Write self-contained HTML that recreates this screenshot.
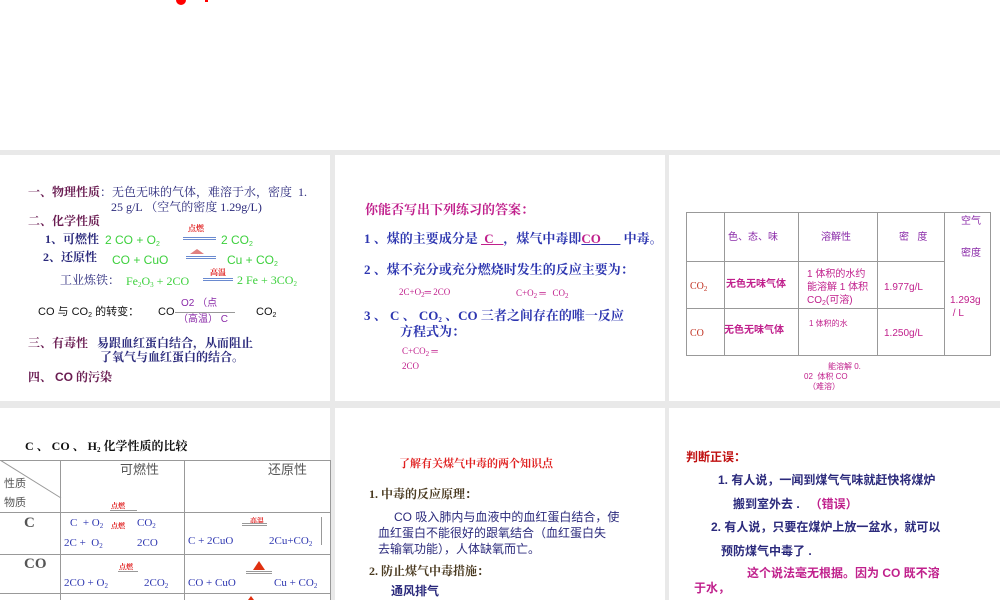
<!DOCTYPE html>
<html><head><meta charset="utf-8"><style>
*{margin:0;padding:0;box-sizing:border-box}
body{width:1000px;height:600px;overflow:hidden;background:#fff;position:relative;font-family:"Liberation Serif","Noto Serif CJK SC",serif;}
.bg{position:absolute;left:0;top:150px;width:1000px;height:450px;background:#e9e9e9}
.p{position:absolute;background:#fff;overflow:hidden}
.t{position:absolute;white-space:nowrap;font-size:11px;line-height:13px}
.s{font-family:"Liberation Sans","Noto Sans CJK SC",sans-serif}
.b{font-weight:bold}
sub{font-size:7px;vertical-align:-2px}
.nv{color:#2b2a7c}.mr{color:#6a1d52}.gr{color:#3dd03d}.rd{color:#e02020}.mg{color:#c0208c}.pu{color:#8a2aa8}.bl{color:#2d36b0}
.ln{position:absolute;background:#999}
.dl{position:absolute;height:3px;border-top:1px solid #6a8ad0;border-bottom:1px solid #6a8ad0}
.f12{font-size:12px;line-height:14px}
.f13{font-size:13px;line-height:15px}
</style></head><body>
<div style="position:absolute;left:176px;top:0;width:10px;height:5px;background:#f00;border-radius:0 0 6px 6px"></div>
<div style="position:absolute;left:205px;top:0;width:3px;height:2px;background:#f00"></div>
<div class="bg"></div>

<!-- panel 1 -->
<div class="p" style="left:0;top:155px;width:330px;height:246px"></div>
<div class="t b mr f12" style="left:28px;top:185px">一、物理性质<span class="nv" style="font-weight:normal">：无色无味的气体，难溶于水，密度&nbsp; 1.</span></div>
<div class="t nv f12" style="left:111px;top:200px">25 g/L （空气的密度 1.29g/L)</div>
<div class="t b mr f12" style="left:28px;top:214px">二、化学性质</div>
<div class="t b nv f12" style="left:45px;top:232px">1、可燃性</div>
<div class="t s gr f12" style="left:105px;top:233px">2 CO + O<sub>2</sub></div>
<div class="t b rd" style="left:188px;top:222px;font-size:8px">点燃</div>
<div class="dl" style="left:183px;top:237px;width:33px"></div>
<div class="t s gr f12" style="left:221px;top:233px">2 CO<sub>2</sub></div>
<div class="t b nv f12" style="left:43px;top:250px">2、还原性</div>
<div class="t s gr f12" style="left:112px;top:253px">CO + CuO</div>
<div style="position:absolute;left:190px;top:249px;width:0;height:0;border-left:7px solid transparent;border-right:7px solid transparent;border-bottom:5px solid #e08080"></div>
<div class="dl" style="left:186px;top:256px;width:30px"></div>
<div class="t s gr f12" style="left:227px;top:253px">Cu + CO<sub>2</sub></div>
<div class="t nv f12" style="left:60px;top:273px">工业炼铁：</div>
<div class="t gr f12" style="left:126px;top:274px">Fe<sub>2</sub>O<sub>3</sub> + 2CO</div>
<div class="t b rd" style="left:210px;top:266px;font-size:8px">高温</div>
<div class="dl" style="left:203px;top:278px;width:30px"></div>
<div class="t gr f12" style="left:237px;top:273px">2 Fe + 3CO<sub>2</sub></div>
<div class="t s" style="left:38px;top:306px;color:#111">CO 与 CO<sub>2</sub> 的转变：</div>
<div class="t s" style="left:158px;top:306px;color:#111">CO</div>
<div class="t s pu" style="left:181px;top:297px;font-size:10px">O2 （点</div>
<div class="t s pu" style="left:178px;top:313px;font-size:10px">（高温） C</div>
<div class="ln" style="left:175px;top:312px;width:60px;height:1px"></div>
<div class="t s" style="left:256px;top:306px;color:#111">CO<sub>2</sub></div>
<div class="t b nv f12" style="left:28px;top:336px"><span class="mr">三、有毒性</span>&nbsp;&nbsp; 易跟血红蛋白结合，从而阻止</div>
<div class="t b nv f12" style="left:100px;top:350px">了氧气与血红蛋白的结合。</div>
<div class="t b mr f12" style="left:28px;top:370px">四、 <span class="s">CO</span> 的污染</div>

<!-- panel 2 -->
<div class="p" style="left:335px;top:155px;width:330px;height:246px"></div>
<div class="t b mg f13" style="left:365px;top:202px">你能否写出下列练习的答案：</div>
<div class="t b bl f13" style="left:364px;top:231px">1 、煤的主要成分是 <u class="mg">&nbsp;C&nbsp;&nbsp;&nbsp;</u>，煤气中毒即<u><span class="mg">CO</span>&nbsp;&nbsp;&nbsp;&nbsp;&nbsp;&nbsp;</u> 中毒。</div>
<div class="t b bl f13" style="left:364px;top:262px">2 、煤不充分或充分燃烧时发生的反应主要为：</div>
<div class="t mg" style="left:399px;top:286px;font-size:9px">2C+O<sub>2</sub>═ 2CO</div>
<div class="t mg" style="left:516px;top:287px;font-size:9px">C+O<sub>2</sub> ═&nbsp;&nbsp; CO<sub>2</sub></div>
<div class="t b bl f13" style="left:364px;top:308px">3 、 C 、 CO<sub>2</sub> 、CO 三者之间存在的唯一反应</div>
<div class="t b bl f13" style="left:400px;top:324px">方程式为：</div>
<div class="t mg" style="left:402px;top:345px;font-size:9px">C+CO<sub>2</sub> ═</div>
<div class="t mg" style="left:402px;top:360px;font-size:9px">2CO</div>

<!-- panel 3 -->
<div class="p" style="left:669px;top:155px;width:331px;height:246px"></div>
<div style="position:absolute;left:686px;top:212px;width:305px;height:144px;border:1px solid #999"></div>
<div class="ln" style="left:724px;top:212px;width:1px;height:144px"></div>
<div class="ln" style="left:798px;top:212px;width:1px;height:144px"></div>
<div class="ln" style="left:877px;top:212px;width:1px;height:144px"></div>
<div class="ln" style="left:944px;top:212px;width:1px;height:144px"></div>
<div class="ln" style="left:686px;top:261px;width:258px;height:1px"></div>
<div class="ln" style="left:686px;top:308px;width:258px;height:1px"></div>
<div class="t s pu" style="left:728px;top:231px;font-size:10px">色、态、味</div>
<div class="t s pu" style="left:821px;top:231px;font-size:10px">溶解性</div>
<div class="t s pu" style="left:899px;top:231px;font-size:10px">密&nbsp;&nbsp;&nbsp;度</div>
<div class="t s pu" style="left:961px;top:215px;font-size:10px">空气</div>
<div class="t s pu" style="left:961px;top:247px;font-size:10px">密度</div>
<div class="t" style="left:690px;top:280px;color:#c03020;font-size:10px">CO<sub>2</sub></div>
<div class="t s b mg" style="left:726px;top:278px;font-size:10px">无色无味气体</div>
<div class="t s mg" style="left:807px;top:268px;font-size:10px;line-height:13px">1 体积的水约<br>能溶解 1 体积<br>CO<sub>2</sub>(可溶)</div>
<div class="t s mg" style="left:884px;top:281px;font-size:10px">1.977g/L</div>
<div class="t s mg" style="left:950px;top:294px;font-size:10px;line-height:13px">1.293g<br>&nbsp;/ L</div>
<div class="t" style="left:690px;top:327px;color:#c03020;font-size:10px">CO</div>
<div class="t s b mg" style="left:724px;top:324px;font-size:10px">无色无味气体</div>
<div class="t s mg" style="left:809px;top:317px;font-size:8px">1 体积的水</div>
<div class="t s mg" style="left:884px;top:327px;font-size:10px">1.250g/L</div>
<div class="t s mg" style="left:828px;top:362px;font-size:8px;line-height:10px">能溶解 0.</div>
<div class="t s mg" style="left:804px;top:372px;font-size:8px;line-height:10px">02&nbsp; 体积 CO</div>
<div class="t s mg" style="left:808px;top:382px;font-size:8px;line-height:10px">（难溶）</div>

<!-- panel 4 -->
<div class="p" style="left:0;top:408px;width:330px;height:192px"></div>
<div class="t b f12" style="left:25px;top:439px;color:#111">C 、 CO 、 H<sub>2</sub> 化学性质的比较</div>
<div style="position:absolute;left:0;top:460px;width:331px;height:140px;border-top:1px solid #999;border-right:1px solid #999"></div>
<div class="ln" style="left:60px;top:460px;width:1px;height:140px"></div>
<div class="ln" style="left:184px;top:460px;width:1px;height:140px"></div>
<div class="ln" style="left:0;top:512px;width:331px;height:1px"></div>
<div class="ln" style="left:0;top:554px;width:331px;height:1px"></div>
<div class="ln" style="left:0;top:593px;width:331px;height:1px"></div>
<svg style="position:absolute;left:0;top:460px" width="62" height="40"><line x1="0" y1="0" x2="61" y2="38" stroke="#999" stroke-width="1"/></svg>
<div class="t s" style="left:120px;top:463px;font-size:13px;color:#555">可燃性</div>
<div class="t s" style="left:268px;top:463px;font-size:13px;color:#555">还原性</div>
<div class="t s" style="left:4px;top:478px;color:#555">性质</div>
<div class="t s" style="left:4px;top:497px;color:#555">物质</div>
<div class="t b rd" style="left:111px;top:500px;font-size:7px">点燃</div>
<div class="ln" style="left:110px;top:510px;width:27px;height:1px"></div>
<div class="t b" style="left:24px;top:517px;font-size:15px;color:#555">C</div>
<div class="t bl" style="left:70px;top:517px">C&nbsp; + O<sub>2</sub></div>
<div class="t b rd" style="left:111px;top:520px;font-size:7px">点燃</div>
<div class="t bl" style="left:137px;top:517px">CO<sub>2</sub></div>
<div class="t bl" style="left:64px;top:537px">2C +&nbsp; O<sub>2</sub></div>
<div class="t bl" style="left:137px;top:537px">2CO</div>
<div class="t b rd" style="left:250px;top:515px;font-size:7px">高温</div>
<div class="dl" style="left:242px;top:523px;width:25px;border-color:#999"></div>
<div class="t bl" style="left:188px;top:535px">C + 2CuO</div>
<div class="t bl" style="left:269px;top:535px">2Cu+CO<sub>2</sub></div>
<div class="ln" style="left:321px;top:517px;width:1px;height:28px"></div>
<div class="t b" style="left:24px;top:558px;font-size:15px;color:#555">CO</div>
<div class="t b rd" style="left:119px;top:561px;font-size:7px">点燃</div>
<div class="ln" style="left:118px;top:571px;width:20px;height:1px"></div>
<div class="t bl" style="left:64px;top:577px">2CO + O<sub>2</sub></div>
<div class="t bl" style="left:144px;top:577px">2CO<sub>2</sub></div>
<div style="position:absolute;left:253px;top:561px;width:0;height:0;border-left:6px solid transparent;border-right:6px solid transparent;border-bottom:9px solid #e03010"></div>
<div class="dl" style="left:246px;top:571px;width:26px;border-color:#999"></div>
<div class="t bl" style="left:188px;top:577px">CO + CuO</div>
<div class="t bl" style="left:274px;top:577px">Cu + CO<sub>2</sub></div>
<div style="position:absolute;left:248px;top:596px;width:0;height:0;border-left:3px solid transparent;border-right:3px solid transparent;border-bottom:4px solid #e03010"></div>

<!-- panel 5 -->
<div class="p" style="left:335px;top:408px;width:330px;height:192px"></div>
<div class="t b rd" style="left:399px;top:458px;font-size:11px">了解有关煤气中毒的两个知识点</div>
<div class="t b f12" style="left:369px;top:487px;color:#4a3a20">1. 中毒的反应原理：</div>
<div class="t s nv f12" style="left:394px;top:510px">CO 吸入肺内与血液中的血红蛋白结合，使</div>
<div class="t s nv f12" style="left:378px;top:526px">血红蛋白不能很好的跟氧结合（血红蛋白失</div>
<div class="t s nv f12" style="left:378px;top:542px">去输氧功能），人体缺氧而亡。</div>
<div class="t b f12" style="left:369px;top:564px;color:#4a3a20">2. 防止煤气中毒措施：</div>
<div class="t s b nv f12" style="left:391px;top:584px">通风排气</div>

<!-- panel 6 -->
<div class="p" style="left:669px;top:408px;width:331px;height:192px"></div>
<div class="t s b rd f12" style="left:686px;top:450px;color:#c01010">判断正误：</div>
<div class="t s b nv f12" style="left:718px;top:473px">1. 有人说，一闻到煤气气味就赶快将煤炉</div>
<div class="t s b nv f12" style="left:733px;top:497px">搬到室外去 .&nbsp;&nbsp; <span class="mg">（错误）</span></div>
<div class="t s b nv f12" style="left:711px;top:520px">2. 有人说，只要在煤炉上放一盆水，就可以</div>
<div class="t s b nv f12" style="left:721px;top:544px">预防煤气中毒了 .</div>
<div class="t s b mg f12" style="left:747px;top:566px">这个说法毫无根据。因为 CO 既不溶</div>
<div class="t s b mg f12" style="left:694px;top:581px">于水，</div>
</body></html>
